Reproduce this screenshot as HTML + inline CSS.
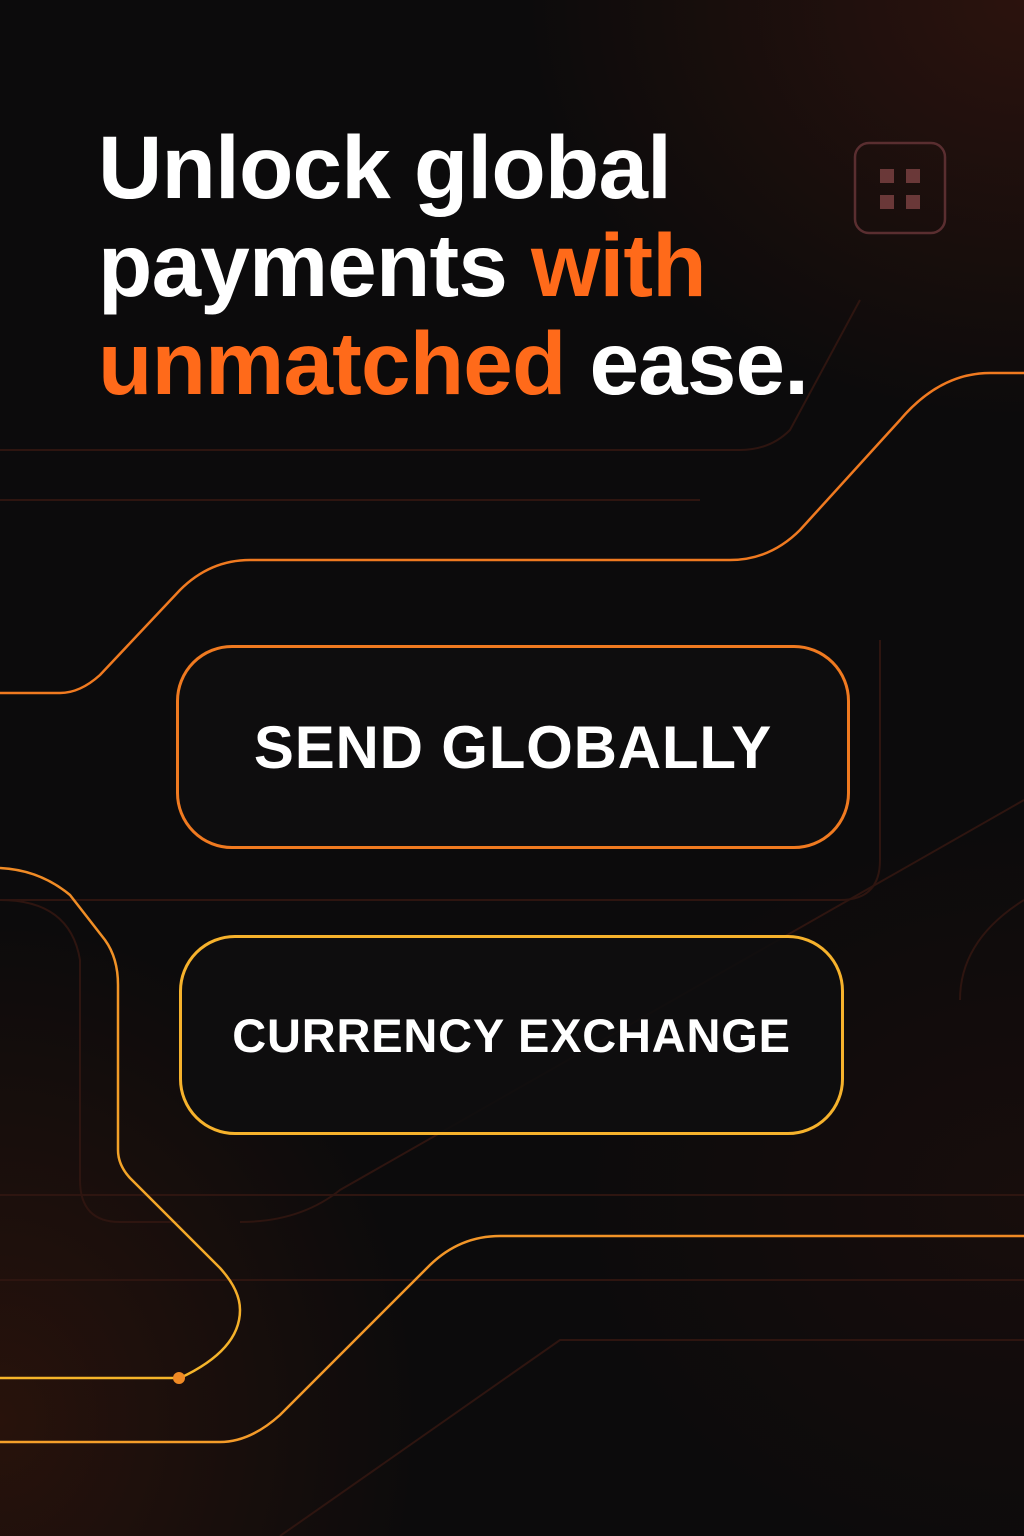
<!DOCTYPE html>
<html><head><meta charset="utf-8"><style>
html,body{margin:0;padding:0}
body{width:1024px;height:1536px;overflow:hidden;position:relative;font-family:"Liberation Sans",sans-serif;
background:radial-gradient(ellipse 500px 420px at 1024px 0px,rgba(90,30,15,.4),transparent),
radial-gradient(ellipse 420px 500px at 0px 1420px,rgba(85,30,10,.38),transparent),
radial-gradient(ellipse 450px 380px at 1024px 1200px,rgba(50,18,10,.3),transparent),#0c0b0c;}
svg{position:absolute;left:0;top:0}
h1{position:absolute;left:98px;top:118px;margin:0;font-size:89px;line-height:98px;font-weight:700;color:#fff;letter-spacing:-0.8px}
.o{color:#ff6a1a}
.btn{position:absolute;box-sizing:border-box;border-radius:56px;display:flex;align-items:center;justify-content:center;color:#fff;font-weight:700;background:rgba(14,13,14,.9)}
</style></head><body>
<svg width="1024" height="1536" viewBox="0 0 1024 1536" fill="none">
<defs>
<linearGradient id="g2" x1="0" y1="868" x2="0" y2="1380" gradientUnits="userSpaceOnUse"><stop offset="0" stop-color="#f08a25"/><stop offset="1" stop-color="#f5b52a"/></linearGradient>
<linearGradient id="g3" x1="0" y1="0" x2="1024" y2="0" gradientUnits="userSpaceOnUse"><stop offset="0" stop-color="#f5a02a"/><stop offset="1" stop-color="#f08a25"/></linearGradient>
</defs>
<g stroke="#2e1510" stroke-width="2">
<path d="M0 450 H740 Q770 450 790 430 L860 300"/>
<path d="M0 500 H700"/>
<path d="M880 640 V860 Q880 900 840 900 H0"/>
<path d="M0 900 Q70 900 80 960 V1180 Q80 1222 120 1222 H180"/>
<path d="M240 1222 Q300 1222 340 1190 L1024 800"/>
<path d="M0 1195 H1024"/>
<path d="M0 1280 H1024"/>
<path d="M280 1536 L560 1340 H1024"/>
<path d="M960 1000 Q960 940 1024 900"/>
</g>
<path d="M0 693 H60 Q80 693 100 675 L180 590 Q210 560 250 560 H730 Q770 560 800 530 L900 420 Q940 373 990 373 H1024" stroke="#f07a20" stroke-width="2.5"/>
<path d="M0 868 Q40 870 70 895 L105 940 Q118 958 118 985 V1150 Q118 1165 130 1178 L220 1268 Q240 1290 240 1310 Q240 1350 180 1378 H0" stroke="url(#g2)" stroke-width="2.5"/>
<circle cx="179" cy="1378" r="6" fill="#f08a25"/>
<path d="M0 1442 H220 Q250 1442 280 1415 L430 1265 Q460 1236 500 1236 H1024" stroke="url(#g3)" stroke-width="2.5"/>
<rect x="855" y="143" width="90" height="90" rx="14" stroke="#5a2e30" stroke-width="2.5"/>
<rect x="880" y="169" width="14" height="14" fill="#6a3838"/><rect x="906" y="169" width="14" height="14" fill="#6a3838"/>
<rect x="880" y="195" width="14" height="14" fill="#6a3838"/><rect x="906" y="195" width="14" height="14" fill="#6a3838"/>
</svg>
<h1>Unlock global<br>payments <span class="o">with</span><br><span class="o">unmatched</span> ease.</h1>
<div class="btn" style="left:176px;top:645px;width:674px;height:204px;border:3px solid #f07a20;font-size:60px;letter-spacing:0.8px">SEND GLOBALLY</div>
<div class="btn" style="left:179px;top:935px;width:665px;height:200px;border:3px solid #f6b22c;font-size:47px;letter-spacing:0.8px">CURRENCY EXCHANGE</div>
</body></html>
